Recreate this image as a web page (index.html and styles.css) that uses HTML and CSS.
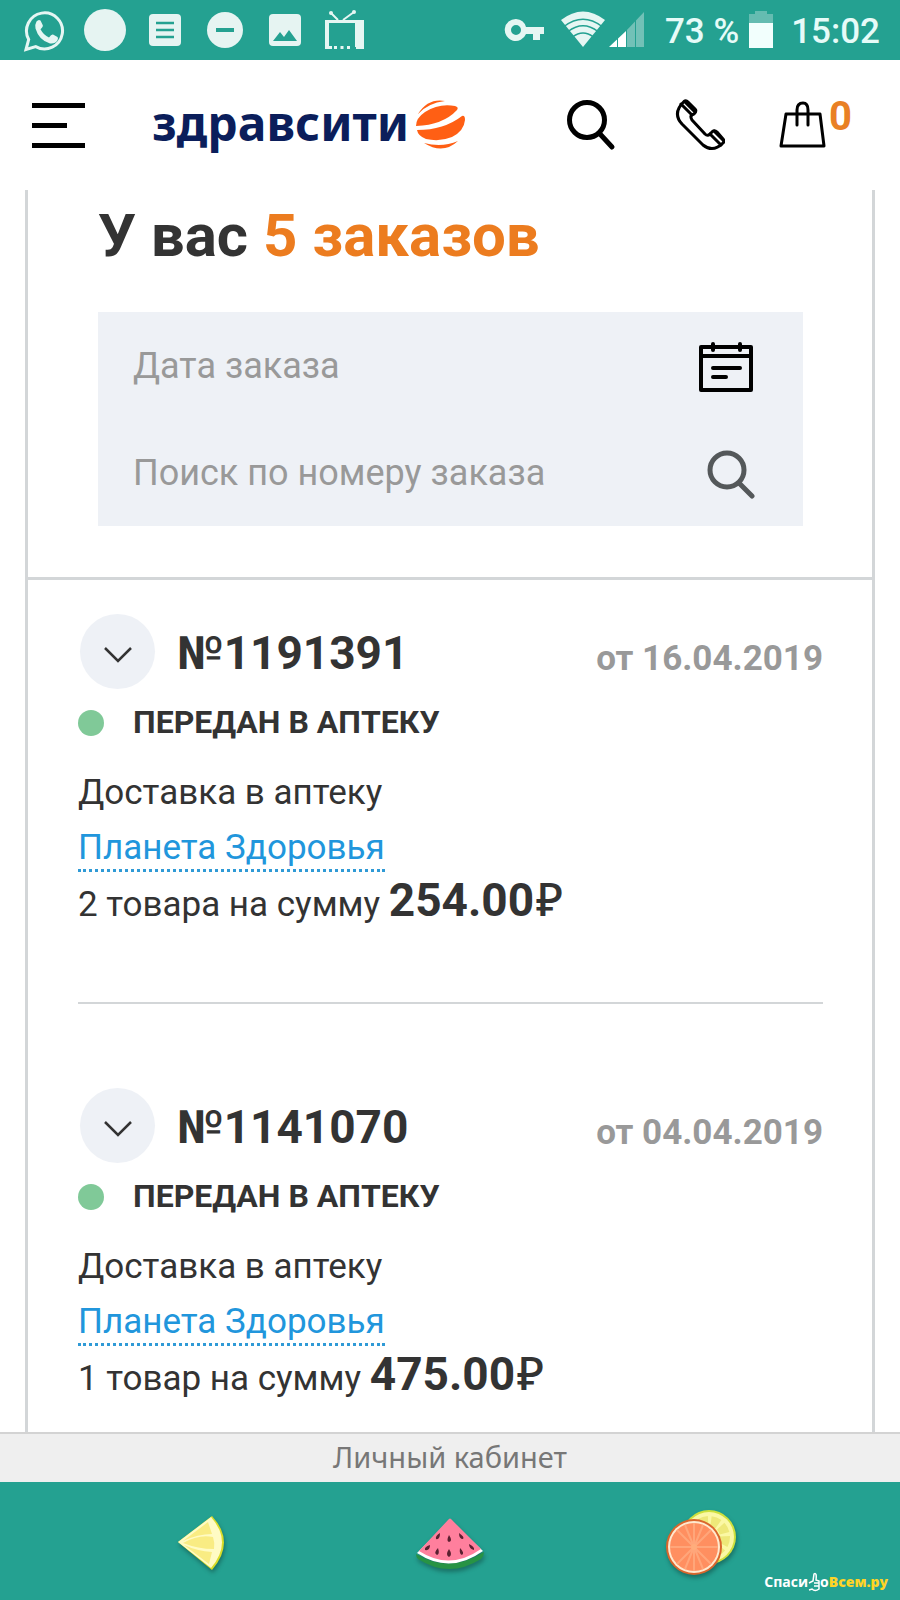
FILE: index.html
```html
<!DOCTYPE html>
<html lang="ru">
<head>
    <meta charset="UTF-8">
    <meta name="viewport" content="width=device-width, initial-scale=1.0">
    <title>Личный кабинет</title>
    <link rel="stylesheet" href="styles.css">
</head>
<body>

    <div class="status-bar">
        <div class="status-icons">
            <svg width="44" height="44" viewBox="0 0 44 44">
                <path d="M3 41.500 L5.700 31.500 A18 18 0 1 1 12.700 38.600 Z" fill="none" stroke="#e6f6f3" stroke-width="3"/>
                <path d="M13.500 13.500 q2-2.500 4-1 l2.300 4.700 q.5 1.500-2.300 4 q3 5.800 8.500 8.300 q2.500-3.500 4-3 l4.500 2.500 q1 .8 0 3.200 q-2.500 4-7.500 3.200 Q16 32.500 12.500 20.500 q-.8-4 1-7z" fill="#e6f6f3"/>
            </svg>
            <svg width="44" height="44" viewBox="0 0 44 44"><circle cx="22" cy="22" r="21" fill="#e6f4f2"/></svg>
            <svg width="44" height="44" viewBox="0 0 44 44">
                <rect x="6" y="6" width="32" height="32" rx="4" fill="#e6f4f2"/>
                <path d="M13 15h18M13 22h18M13 29h18" stroke="#24a191" stroke-width="2.500"/>
            </svg>
            <svg width="44" height="44" viewBox="0 0 44 44">
                <circle cx="22" cy="22" r="18" fill="#e6f4f2"/>
                <path d="M13 22h18" stroke="#24a191" stroke-width="4"/>
            </svg>
            <svg width="44" height="44" viewBox="0 0 44 44">
                <rect x="6" y="6" width="32" height="32" rx="4" fill="#e6f4f2"/>
                <path d="M10 33l7-9 4 5 5-7 8 11z" fill="#24a191"/>
            </svg>
            <svg width="44" height="44" viewBox="0 0 44 44">
                <path d="M2 12h39v29h-8v-2h-1V15H6v23h3v3H2z" fill="#e6f6f3"/>
                <path d="M11 39.500h3M17.500 39.500h3M24 39.500h3" stroke="#e6f6f3" stroke-width="3"/>
                <path d="M15 12L8 5M20 12L31 4" stroke="#e6f6f3" stroke-width="2"/>
                <circle cx="8" cy="5" r="2" fill="#e6f6f3"/><circle cx="31" cy="4" r="2" fill="#e6f6f3"/>
            </svg>
        </div>
        <div class="status-info">
            <svg width="40" height="44" viewBox="0 0 40 44">
                <path fill-rule="evenodd" d="M12 11a11 11 0 1 0 10 15h7v6h7v-6h4v-7H22A11 11 0 0 0 12 11zM12 17a5 5 0 1 1 0 10a5 5 0 0 1 0-10z" fill="#e6f6f3"/>
            </svg>
            <svg width="44" height="44" viewBox="0 0 44 44">
                <path d="M0 12Q22-5 44 12L22 39z" fill="#e6f6f3"/>
                <path d="M3 18.500Q22 4 41 18.500M7 23.500Q22 12 37 23.500M11.500 29Q22 21 32.500 29" fill="none" stroke="#24a191" stroke-width="1.500"/>
            </svg>
            <svg width="36" height="44" viewBox="0 0 36 44">
                <path d="M17 39V23L35 4v35z" fill="#72c1b7"/>
                <path d="M0 39L17 23v16z" fill="#fff"/>
                <path d="M8.500 28v12M17.500 18v22M26.500 10v30" stroke="#24a191"/>
            </svg>
            <span class="battery-level">73 %</span>
            <svg class="battery" width="24" height="44" viewBox="0 0 24 44">
                <path d="M0 6h6V3h12v3h6v12H0z" fill="#65bcb1"/>
                <path d="M0 15h24v25H0z" fill="#f2fffd"/>
            </svg>
            <span>15:02</span>
        </div>
    </div>

    <header class="header">
        <button class="menu-button" aria-label="Меню"><i></i><i></i><i></i></button>
        <a class="logo" href="#">
            <span>здравсити</span>
            <svg width="52" height="52" viewBox="0 0 52 52" fill="#ff5f14">
                <path d="M4 15Q14-1 31 2Q14 4 4 15z"/>
                <path d="M2 27Q2 19 11 13Q25 4 41 7Q45 8 43 11Q29 26 2 27z"/>
                <path d="M3 31Q30 31 48 17Q51 16 51 21Q50 32 38 38Q26 43 12 40Q4 37 3 31z"/>
                <path d="M10 44Q28 49 44 42Q29 56 10 44z"/>
            </svg>
        </a>
        <nav class="header-nav">
            <button class="icon-button" aria-label="Поиск">
                <svg width="52" height="52" viewBox="2 0 52 52" fill="none" stroke="#000">
                    <circle cx="22" cy="21" r="17.500" stroke-width="5"/>
                    <path d="M35 35l12 13" stroke-width="5" stroke-linecap="round"/>
                </svg>
            </button>
            <a class="icon-button" href="#" aria-label="Позвонить">
                <svg width="52" height="52" viewBox="-2 0 52 52" fill="none" stroke="#000" stroke-width="3" stroke-linejoin="round" stroke-linecap="round">
                    <path d="M9 2.500Q11 1 13 3L20 10Q22 12 19 15Q14 16 17 21L30 35Q33 38 36 34L38 32Q40 31 42 33L48 40Q50 42 48 44Q38 54 28 46L7 25Q-3 14 9 2.500z"/>
                    <path d="M6 5L17 16M35 35L46 46M10 3L20 13M39 32L49 42"/>
                </svg>
            </a>
            <a class="cart" href="#" aria-label="Корзина">
                <svg width="48" height="52" viewBox="0 0 48 52" fill="none" stroke="#000" stroke-width="3" stroke-linejoin="round" stroke-linecap="round">
                    <path d="M7 15h34l4 32H2z"/>
                    <path d="M18 26V11Q18 4 24 4Q29 4 29 11V26"/>
                </svg>
                <span class="cart-count">0</span>
            </a>
        </nav>
    </header>

    <main class="orders">
        <section class="filter">
            <h1>У вас <span>5 заказов</span></h1>
            <form class="filter-form">
                <div class="field">
                    <input type="text" aria-label="Дата заказа" placeholder="Дата заказа">
                    <button type="button" aria-label="Выбрать дату">
                        <svg width="56" height="52" viewBox="0 0 56 52" fill="none" stroke="#000" stroke-width="4" stroke-linejoin="round" stroke-linecap="round">
                            <path d="M2 7h50v43H2zM2 16h50M14 4v6M41 4v6M14 28h27M14 37h13"/>
                        </svg>
                    </button>
                </div>
                <div class="field">
                    <input type="text" aria-label="Поиск по номеру заказа" placeholder="Поиск по номеру заказа">
                    <button type="submit" aria-label="Найти">
                        <svg width="48" height="52" viewBox="0 0 48 52" fill="none" stroke="#54585a">
                            <circle cx="20" cy="23" r="17" stroke-width="5"/>
                            <path d="M33 37l12 12" stroke-width="5" stroke-linecap="round"/>
                        </svg>
                    </button>
                </div>
            </form>
        </section>

        <article class="order">
            <div class="order-head">
                <button class="toggle" aria-label="Показать заказ">
                    <svg width="30" height="18" viewBox="0 0 30 18"><path d="M2 2l13 13L28 2" fill="none" stroke="#333" stroke-width="2.500"/></svg>
                </button>
                <h2>№1191391</h2>
                <time datetime="2019-04-16">от 16.04.2019</time>
            </div>
            <p class="order-status">ПЕРЕДАН В АПТЕКУ</p>
            <p>Доставка в аптеку</p>
            <p><a class="pharmacy" href="#">Планета Здоровья</a></p>
            <p>2 товара на сумму <strong>254.00<span class="rub">₽</span></strong></p>
        </article>

        <article class="order">
            <div class="order-head">
                <button class="toggle" aria-label="Показать заказ">
                    <svg width="30" height="18" viewBox="0 0 30 18"><path d="M2 2l13 13L28 2" fill="none" stroke="#333" stroke-width="2.500"/></svg>
                </button>
                <h2>№1141070</h2>
                <time datetime="2019-04-04">от 04.04.2019</time>
            </div>
            <p class="order-status">ПЕРЕДАН В АПТЕКУ</p>
            <p>Доставка в аптеку</p>
            <p><a class="pharmacy" href="#">Планета Здоровья</a></p>
            <p>1 товар на сумму <strong>475.00<span class="rub">₽</span></strong></p>
        </article>
    </main>

    <div class="page-label">Личный кабинет</div>

    <nav class="bottom-nav">
        <button aria-label="Назад">
            <svg width="72" height="72" viewBox="0 0 72 72">
                <path d="M14 36L48 10Q72 36 48 64z" fill="#d9dc27"/>
                <path d="M14 36L47 11Q69 36 47 62z" fill="#fffbc4"/>
                <path d="M19 35L44 16L48 28Q34 28 19 35zM19 37Q35 28 49 31Q51 37 50 43Q34 43 19 37zM20 39Q33 45 48 46L45 58z" fill="#f9ec83"/>
            </svg>
        </button>
        <button aria-label="Домой">
            <svg width="72" height="72" viewBox="0 -4 72 72">
                <path d="M2 44Q35 64 70 42Q70 46 67 49Q35 69 4 49Q2 47 2 44z" fill="#279344"/>
                <path d="M3 43L36 10L69 41Q36 65 3 43z" fill="#fff"/>
                <path d="M5 41L34 10Q36 7 38 10L67 39Q36 61 5 41z" fill="#ff7f9d"/>
                <path d="M26 23q-5 3-4 6q4 1 4-6zM45 23q0 6 4 6q2-2-4-6zM35 25q-3 6 0 7q4-1 0-7zM16 35q-6 2-5 5q5 1 5-5zM24 38q-5 5-1 7q3-1 1-7zM35 39q-4 6 0 8q4-2 0-8zM46 38q-1 6 2 7q3-2-2-7zM55 34q0 5 5 6q1-3-5-6z" fill="#5a2030"/>
            </svg>
        </button>
        <button aria-label="Недавние">
            <svg width="72" height="72" viewBox="0 0 72 72">
                <circle cx="45" cy="31" r="27" fill="#cfe03c"/>
                <circle cx="45" cy="31" r="25" fill="#fbf8a5"/>
                <circle cx="45" cy="31" r="16" fill="none" stroke="#eee879" stroke-width="10" stroke-dasharray="8 3"/>
                <circle cx="30" cy="41" r="28" fill="#d9662c"/>
                <circle cx="30" cy="41" r="26" fill="#ffe9cf"/>
                <circle cx="30" cy="41" r="24" fill="#ff8f60"/>
                <path d="M30 17v48M6 41h48M13 24l34 34M13 58l34-34M21 19l18 44M39 19L21 63" stroke="#ffa67a" stroke-width="2"/>
                <circle cx="30" cy="41" r="3" fill="#ffad7c"/>
            </svg>
        </button>
        <div class="watermark">Спаси<svg width="12" height="20" viewBox="0 0 12 20"><path d="M1 11L5 9L6 2Q9 0 8 8L11 9V17Q7 20 4 17L1 18M6 11h5M6 14h5" fill="#24a191" stroke="#fff" stroke-width="1.500"/></svg>о<b>Всем.ру</b></div>
    </nav>

</body>
</html>
```
FILE: styles.css
```css
* {
    box-sizing: border-box;
}
body {
    margin: 0;
    min-height: 100vh;
    display: flex;
    flex-direction: column;
    background-color: #fff;
    color: #333;
    font-family: Roboto, "Liberation Sans", sans-serif;
    font-size: 35px;
}
svg {
    display: block;
    flex: none;
}
button {
    padding: 0;
    border: 0;
    background: none;
    cursor: pointer;
}
h1, h2, p {
    margin: 0;
}
/* Phone status bar */
.status-bar {
    height: 60px;
    padding: 0 20px 0 23px;
    display: flex;
    align-items: center;
    justify-content: space-between;
    background-color: #24a191;
    color: #e6fbf8;
    font-weight: 500;
}
.status-icons {
    display: flex;
    gap: 16px;
}
.status-info {
    display: flex;
    align-items: center;
}
.status-info span {
    padding-top: 2px;
}
.status-info svg:nth-child(2) {
    margin-left: 17px;
}
.status-info svg:nth-child(3) {
    margin-left: 4px;
}
.battery-level {
    margin-left: 20px;
}
.battery {
    margin: 0 18px 0 10px;
}
/* Site header */
.header {
    height: 130px;
    padding: 0 48px 0 32px;
    display: flex;
    align-items: center;
}
.menu-button {
    width: 53px;
    display: flex;
    flex-direction: column;
    gap: 15px;
}
.menu-button i {
    width: 100%;
    height: 5px;
    background-color: #000;
}
.menu-button i:nth-child(2) {
    width: 35px;
}
.logo {
    margin-left: 67px;
    display: flex;
    align-items: center;
    gap: 5px;
    color: #0b1e5b;
    font-family: "Noto Sans", "Open Sans", sans-serif;
    font-size: 48px;
    font-weight: 700;
    line-height: 48px;
    text-decoration: none;
}
.logo span {
    padding-bottom: 4px;
}
.header-nav {
    margin-left: auto;
    display: flex;
    align-items: center;
    gap: 54px;
}
.cart {
    display: flex;
    gap: 2px;
    color: #e98024;
    text-decoration: none;
}
.cart-count {
    font-size: 40px;
    font-weight: 700;
    line-height: 36px;
}
/* Orders card */
.orders {
    flex: 1;
    margin: 0 25px;
    border: solid #d3d6d8;
    border-width: 0 3px;
}
.filter {
    padding: 12px 69px 51px 70px;
    border-bottom: 3px solid #d3d6d8;
}
h1 {
    margin-bottom: 42px;
    font-size: 60px;
    line-height: 68px;
}
h1 span {
    color: #ec7c1f;
}
.filter-form {
    background-color: #eef1f6;
}
.field {
    height: 107px;
    padding: 0 48px 0 35px;
    display: flex;
    align-items: center;
}
.field input {
    flex: 1;
    min-width: 0;
    padding: 0;
    border: 0;
    outline: none;
    background: none;
    color: #333;
    font-family: inherit;
    font-size: 36px;
}
.field input::placeholder {
    color: #999;
    opacity: 1;
}
.order {
    margin: 0 49px 0 50px;
    padding: 34px 0 70px;
    line-height: 55px;
}
.order + .order {
    padding: 84px 0 26px;
    border-top: 2px solid #d3d6d8;
}
.order-head {
    display: flex;
    align-items: center;
}
.toggle {
    width: 75px;
    height: 75px;
    padding-top: 6px;
    margin: 0 22px 0 2px;
    display: flex;
    align-items: center;
    justify-content: center;
    border-radius: 50%;
    background-color: #eef1f6;
}
h2 {
    padding-top: 4px;
    font-size: 46px;
}
time {
    margin-left: auto;
    padding-top: 13px;
    color: #999;
    font-weight: 700;
}
.order-status {
    margin: 6px 0 15px;
    display: flex;
    align-items: center;
    gap: 29px;
    font-size: 32px;
    font-weight: 700;
}
.order-status::before {
    content: "";
    width: 26px;
    height: 26px;
    border-radius: 50%;
    background-color: #80c998;
}
.pharmacy {
    padding-bottom: 1px;
    border-bottom: 3px dotted #2f9ad6;
    color: #2196dc;
    text-decoration: none;
}
strong {
    font-size: 46px;
    line-height: 1;
}
.rub {
    margin-left: 2px;
    font-family: "Noto Sans", Roboto, sans-serif;
    font-weight: 500;
    line-height: 1;
}
/* Page title strip and phone navigation */
.page-label {
    height: 50px;
    border-top: 2px solid #d3d3d3;
    background-color: #efefef;
    color: #777;
    font-family: "Noto Sans", "Open Sans", sans-serif;
    font-size: 29px;
    line-height: 46px;
    text-align: center;
}
.bottom-nav {
    position: relative;
    height: 120px;
    padding: 0 75px;
    display: grid;
    grid-template-columns: repeat(3, 1fr);
    place-items: center;
    background-color: #24a191;
}
.bottom-nav button svg {
    filter: drop-shadow(1px 3px 2px rgba(0, 0, 0, 0.3));
}
/* Site mark over the corner */
.watermark {
    position: absolute;
    right: 12px;
    bottom: 8px;
    display: flex;
    align-items: center;
    color: #fff;
    font-family: "Open Sans", sans-serif;
    font-size: 14px;
    font-weight: 700;
    line-height: 24px;
}
.watermark b {
    color: #ffd426;
}
```
